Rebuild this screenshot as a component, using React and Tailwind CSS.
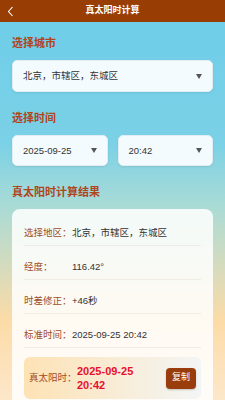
import React from "react";

const font = { fontFamily: '"Liberation Sans", "Noto Sans CJK SC", sans-serif' };

const Caret = () => (
  <svg width="6" height="5" viewBox="0 0 6 5" className="shrink-0">
    <path d="M0 0 H6 L3 5 Z" fill="#555" />
  </svg>
);

const SelectBox = ({ value, className = "" }) => (
  <div
    className={`flex items-center justify-between rounded-[5px] border border-[#e1edf2] bg-[#f4fbfe] pl-[10px] pr-[10px] shadow-[0_1px_2px_rgba(0,0,0,0.08)] ${className}`}
  >
    <span className="text-[9.5px] leading-[14px] text-[#333]">{value}</span>
    <Caret />
  </div>
);

const SectionTitle = ({ children, className = "" }) => (
  <div className={`text-[11px] leading-[16px] font-bold text-[#b0451c] ${className}`}>{children}</div>
);

const rows = [
  { label: "选择地区：", value: "北京，市辖区，东城区" },
  { label: "经度：", value: "116.42°" },
  { label: "时差修正：", value: "+46秒" },
  { label: "标准时间：", value: "2025-09-25 20:42" },
];

export default function App() {
  return (
    <div
      className="w-full min-h-[400px] overflow-hidden bg-[linear-gradient(180deg,#6dcdea_0%,#7bd1e6_35%,#a9dbd6_50%,#fcdba7_78%,#fde9cf_100%)]"
      style={font}
    >
      {/* Header */}
      <div className="relative flex h-[22px] items-center justify-center bg-[#983e05]">
        <svg width="7" height="11" viewBox="0 0 7 11" className="absolute left-[7px] top-[6px]">
          <polyline points="5.5,1 1.5,5.5 5.5,10" fill="none" stroke="#fff" strokeWidth="1.1" />
        </svg>
        <span className="text-[9px] font-bold text-white">真太阳时计算</span>
      </div>

      <div className="px-3">
        <SectionTitle className="mt-[13px]">选择城市</SectionTitle>
        <SelectBox value="北京，市辖区，东城区" className="mt-[9px] h-[32px]" />

        <SectionTitle className="mt-[18px]">选择时间</SectionTitle>
        <div className="mt-[9px] flex gap-[10px]">
          <SelectBox value="2025-09-25" className="h-[31px] flex-1" />
          <SelectBox value="20:42" className="h-[31px] flex-1" />
        </div>

        <SectionTitle className="mt-[18px]">真太阳时计算结果</SectionTitle>
        <div className="mt-[9px] rounded-t-[8px] bg-white/85 px-3 pt-[17px] pb-3">
          {rows.map((r, i) => (
            <div key={i} className="mb-[14px] flex border-b border-[#f1ece6] pb-[5px]">
              <span className="w-[48px] shrink-0 text-[9.5px] leading-[14px] text-[#a04a26]">{r.label}</span>
              <span className="text-[9.5px] leading-[14px] text-[#333]">{r.value}</span>
            </div>
          ))}
          <div className="-mt-[5px] flex items-center rounded-[6px] bg-gradient-to-r from-[#fde2b4] to-[#f3f5f5] px-[5px] py-[7px]">
            <span className="w-[48px] shrink-0 text-[9.5px] leading-[14px] text-[#a04a26]">真太阳时：</span>
            <div className="flex-1 text-[11px] leading-[14px] font-bold text-[#e8112d]">
              <div>2025-09-25</div>
              <div>20:42</div>
            </div>
            <button className="h-[21px] w-[30px] rounded-[4px] bg-[#9a3d0d] text-[9px] text-white shadow-[0_1px_2px_rgba(0,0,0,0.2)]">
              复制
            </button>
          </div>
        </div>
      </div>
    </div>
  );
}
